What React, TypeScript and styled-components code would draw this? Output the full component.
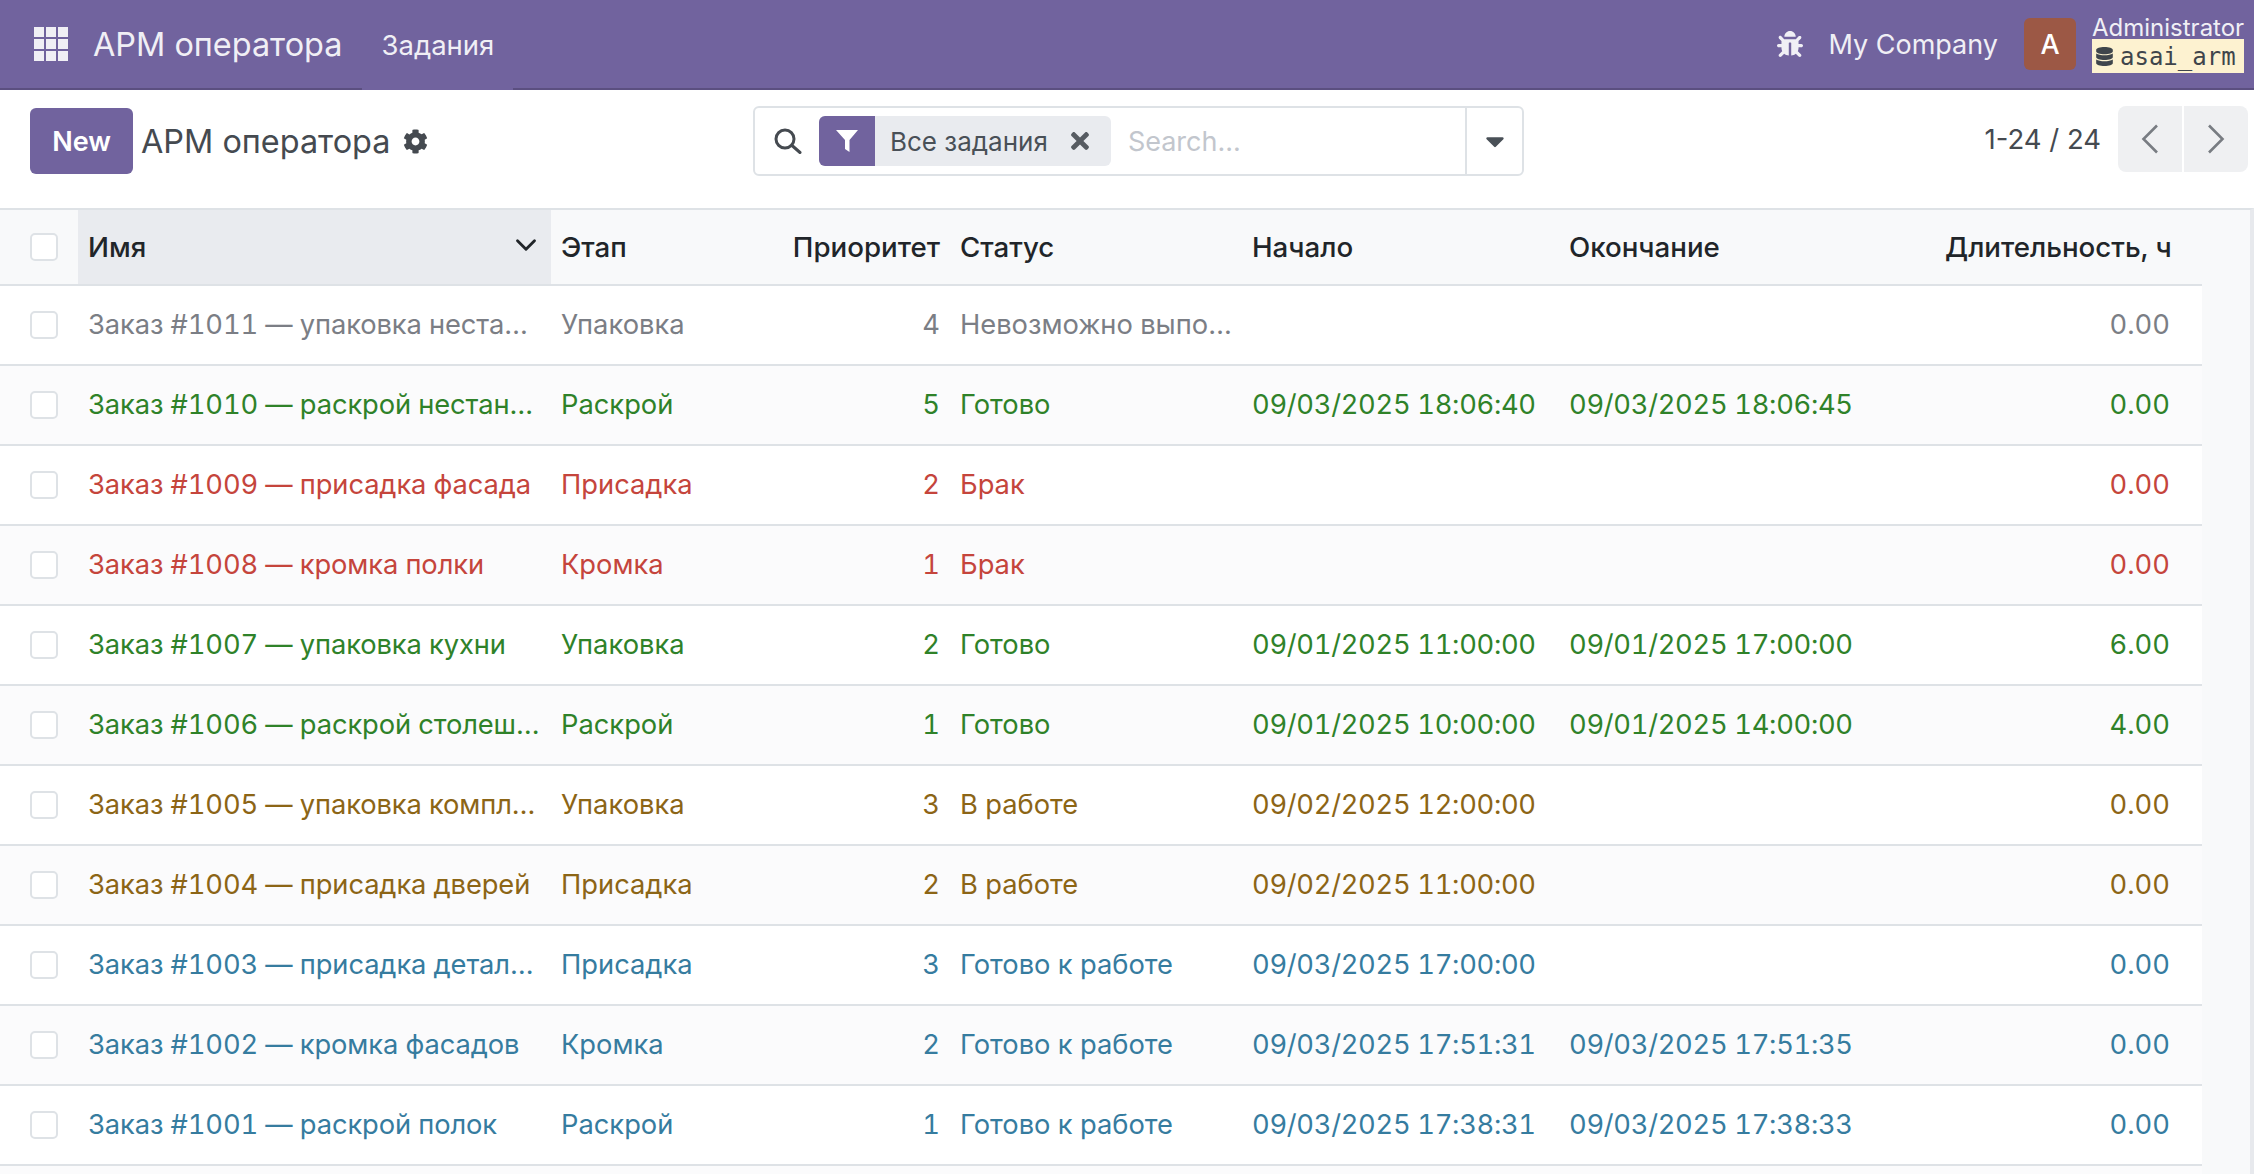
import React from 'react';
import styled, { createGlobalStyle } from 'styled-components';
import { FaBug, FaCaretDown, FaCog, FaDatabase, FaTimes } from 'react-icons/fa';
import { LuChevronDown } from 'react-icons/lu';

type Decoration = 'muted' | 'success' | 'danger' | 'warning' | 'info';

interface Task {
  name: string;
  stage: string;
  priority: number;
  status: string;
  start?: string;
  end?: string;
  duration: string;
  decoration: Decoration;
}

const decorationColors: Record<Decoration, string> = {
  muted: '#7b7e85',
  success: '#2f8229',
  danger: '#c5453c',
  warning: '#8c6516',
  info: '#367c9f',
};

const tasks: Task[] = [
  { name: 'Заказ #1011 — упаковка нестандартной мебели', stage: 'Упаковка', priority: 4, status: 'Невозможно выполнить', duration: '0.00', decoration: 'muted' },
  { name: 'Заказ #1010 — раскрой нестандартных деталей', stage: 'Раскрой', priority: 5, status: 'Готово', start: '09/03/2025 18:06:40', end: '09/03/2025 18:06:45', duration: '0.00', decoration: 'success' },
  { name: 'Заказ #1009 — присадка фасада', stage: 'Присадка', priority: 2, status: 'Брак', duration: '0.00', decoration: 'danger' },
  { name: 'Заказ #1008 — кромка полки', stage: 'Кромка', priority: 1, status: 'Брак', duration: '0.00', decoration: 'danger' },
  { name: 'Заказ #1007 — упаковка кухни', stage: 'Упаковка', priority: 2, status: 'Готово', start: '09/01/2025 11:00:00', end: '09/01/2025 17:00:00', duration: '6.00', decoration: 'success' },
  { name: 'Заказ #1006 — раскрой столешницы', stage: 'Раскрой', priority: 1, status: 'Готово', start: '09/01/2025 10:00:00', end: '09/01/2025 14:00:00', duration: '4.00', decoration: 'success' },
  { name: 'Заказ #1005 — упаковка комплекта', stage: 'Упаковка', priority: 3, status: 'В работе', start: '09/02/2025 12:00:00', duration: '0.00', decoration: 'warning' },
  { name: 'Заказ #1004 — присадка дверей', stage: 'Присадка', priority: 2, status: 'В работе', start: '09/02/2025 11:00:00', duration: '0.00', decoration: 'warning' },
  { name: 'Заказ #1003 — присадка деталей', stage: 'Присадка', priority: 3, status: 'Готово к работе', start: '09/03/2025 17:00:00', duration: '0.00', decoration: 'info' },
  { name: 'Заказ #1002 — кромка фасадов', stage: 'Кромка', priority: 2, status: 'Готово к работе', start: '09/03/2025 17:51:31', end: '09/03/2025 17:51:35', duration: '0.00', decoration: 'info' },
  { name: 'Заказ #1001 — раскрой полок', stage: 'Раскрой', priority: 1, status: 'Готово к работе', start: '09/03/2025 17:38:31', end: '09/03/2025 17:38:33', duration: '0.00', decoration: 'info' },
];

const columnWidths = [78, 473, 230, 169, 292, 317, 376, 245, 22];

const GlobalStyle = createGlobalStyle`
  html, body {
    margin: 0;
    height: 100%;
    overflow: hidden;
  }
  body {
    font-family: Inter, "Liberation Sans", sans-serif;
    font-size: 27px;
    background: #fff;
  }
`;

const Page = styled.div`
  height: 1174px;
  display: flex;
  flex-direction: column;
  overflow: hidden;
`;

const NavBar = styled.header`
  box-sizing: border-box;
  height: 90px;
  flex-shrink: 0;
  display: flex;
  align-items: center;
  background: #71639e;
  border-bottom: 2px solid #5b4f80;
  color: #f0eff5;
`;

const AppsIcon = styled.svg`
  width: 34px;
  height: 34px;
  margin-left: 34px;
  fill: #f0eff5;
`;

const Brand = styled.span`
  margin-left: 25px;
  font-size: 32.4px;
`;

const MenuItem = styled.span`
  box-sizing: border-box;
  height: 90px;
  width: 151px;
  margin-left: 20px;
  display: flex;
  align-items: center;
  justify-content: center;
  background: #71639e;
  font-size: 27.5px;
  margin-bottom: -2px;
`;

const NavRight = styled.div`
  margin-left: auto;
  display: flex;
  align-items: center;
  padding-right: 10px;
`;

const BugIcon = styled(FaBug)`
  width: 26px;
  height: 26px;
  margin-right: 25px;
`;

const CompanyName = styled.span`
  font-size: 27px;
  margin-right: 26px;
`;

const Avatar = styled.span`
  width: 52px;
  height: 52px;
  border-radius: 6px;
  background: #9c5845;
  color: #fff;
  font-size: 27px;
  font-weight: 500;
  display: flex;
  align-items: center;
  justify-content: center;
  margin-right: 16px;
`;

const UserBlock = styled.div`
  width: 152px;
  display: flex;
  flex-direction: column;
`;

const UserName = styled.span`
  height: 24px;
  font-size: 24px;
  line-height: 26px;
  white-space: nowrap;
`;

const DbBadge = styled.span`
  height: 34px;
  display: flex;
  align-items: center;
  gap: 7px;
  padding: 1px 0 0 4px;
  box-sizing: border-box;
  background: #fdf2d0;
  color: #3f454b;
  font-family: "DejaVu Sans Mono", "Liberation Mono", monospace;
  font-size: 24px;

  svg {
    width: 17px;
    height: 19px;
  }
`;

const ControlPanel = styled.div`
  box-sizing: border-box;
  height: 118px;
  flex-shrink: 0;
  display: flex;
  align-items: flex-start;
  padding: 16px 6px 0 30px;
`;

const NewButton = styled.button`
  width: 103px;
  height: 66px;
  margin-top: 2px;
  border: 0;
  border-radius: 6px;
  background: #71639e;
  color: #fff;
  font: 600 27px Inter, sans-serif;
`;

const Title = styled.div`
  width: 612px;
  height: 66px;
  margin-top: 2px;
  margin-left: 8px;
  display: flex;
  align-items: center;
  gap: 13px;
  color: #454a50;
  font-size: 32.4px;

  svg {
    width: 25px;
    height: 25px;
  }
`;

const SearchBox = styled.div`
  box-sizing: border-box;
  width: 771px;
  height: 70px;
  display: flex;
  align-items: center;
  border: 2px solid #dee2e6;
  border-radius: 6px;
`;

const SearchIcon = styled.svg`
  width: 28px;
  height: 26px;
  margin-left: 19px;
  fill: none;
  stroke: #454a50;
  stroke-width: 3;
  stroke-linecap: round;
`;

const Facet = styled.div`
  height: 50px;
  display: flex;
  align-items: center;
  margin-left: 17px;
  background: #e9ebef;
  border-radius: 6px;
  overflow: hidden;
  color: #495057;
`;

const FacetIcon = styled.span`
  width: 56px;
  height: 100%;
  display: flex;
  align-items: center;
  justify-content: center;
  background: #71639e;
  color: #fff;

  svg {
    width: 22px;
    height: 22px;
    fill: currentColor;
  }
`;

const FacetLabel = styled.span`
  margin-left: 15px;
  font-size: 26px;
`;

const FacetRemove = styled(FaTimes)`
  width: 26px;
  height: 26px;
  margin: 0 18px 0 19px;
  color: #575c62;
`;

const SearchPlaceholder = styled.span`
  flex: 1;
  margin-left: 17px;
  color: #c2c6cd;
  font-size: 27px;
`;

const SearchToggle = styled.span`
  width: 55px;
  height: 100%;
  display: flex;
  align-items: center;
  justify-content: center;
  border-left: 2px solid #dee2e6;
  color: #495057;

  svg {
    width: 30px;
    height: 30px;
  }
`;

const Pager = styled.div`
  margin-left: auto;
  display: flex;
  align-items: center;
  height: 66px;
  color: #454a50;
  font-size: 27.5px;
`;

const PagerButtons = styled.div`
  display: flex;
  gap: 2px;
  margin-left: 17px;
`;

const PagerButton = styled.span<{ $side: 'left' | 'right' }>`
  width: 64px;
  height: 66px;
  display: flex;
  align-items: center;
  justify-content: center;
  background: #eff0f2;
  color: #787c82;
  border-radius: ${(p) => (p.$side === 'left' ? '8px 0 0 8px' : '0 8px 8px 0')};

  svg {
    width: 18px;
    height: 30px;
    fill: none;
    stroke: currentColor;
    stroke-width: 2.6;
  }
`;

const ListArea = styled.div`
  flex: 1;
  overflow: hidden;
  background: #f8f9fa;
  border-top: 2px solid #dee2e6;
  border-right: 4px solid #e7e9ed;
`;

const Table = styled.table`
  width: 2202px;
  table-layout: fixed;
  border-collapse: separate;
  border-spacing: 0;
  font-variant-numeric: tabular-nums;
`;

const HeaderCell = styled.th<{ $right?: boolean; $sorted?: boolean }>`
  box-sizing: border-box;
  height: 76px;
  padding: 0 10px;
  border-bottom: 2px solid #dee2e6;
  background: ${(p) => (p.$sorted ? '#e9ebef' : '#f8f9fa')};
  background-clip: padding-box;
  color: #212529;
  font-size: 27.7px;
  font-weight: 500;
  text-align: ${(p) => (p.$right ? 'right' : 'left')};
  white-space: nowrap;
`;

const SortHeader = styled.div`
  display: flex;
  align-items: center;
  justify-content: space-between;

  svg {
    width: 34px;
    height: 34px;
    margin-top: -4px;
    margin-right: -2px;
  }
`;

const Row = styled.tr<{ $color: string; $striped: boolean }>`
  color: ${(p) => p.$color};
  background: ${(p) => (p.$striped ? '#fbfbfc' : '#fff')};
`;

const Cell = styled.td<{ $right?: boolean; $spacing?: string }>`
  box-sizing: border-box;
  height: 80px;
  padding: 0 10px 1px;
  border-bottom: 2px solid #dee2e6;
  font-size: 27.3px;
  letter-spacing: ${(p) => p.$spacing ?? 'normal'};
  text-align: ${(p) => (p.$right ? 'right' : 'left')};
  white-space: nowrap;
  overflow: hidden;
  text-overflow: ellipsis;
`;

const CheckCell = styled.div`
  display: flex;
  justify-content: center;
  padding-left: 10px;
`;

const CheckBox = styled.span`
  box-sizing: border-box;
  width: 28px;
  height: 28px;
  border: 2px solid #dee2e6;
  border-radius: 5px;
  background: #fff;
`;

export default function App() {
  return (
    <Page>
      <GlobalStyle />
      <NavBar>
        <AppsIcon viewBox="0 0 34 34">
          {[0, 1, 2].flatMap((row) =>
            [0, 1, 2].map((col) => (
              <rect key={`${row}-${col}`} x={col * 12} y={row * 12} width="10" height="10" />
            ))
          )}
        </AppsIcon>
        <Brand>АРМ оператора</Brand>
        <MenuItem>Задания</MenuItem>
        <NavRight>
          <BugIcon />
          <CompanyName>My Company</CompanyName>
          <Avatar>A</Avatar>
          <UserBlock>
            <UserName>Administrator</UserName>
            <DbBadge>
              <FaDatabase />
              asai_arm
            </DbBadge>
          </UserBlock>
        </NavRight>
      </NavBar>
      <ControlPanel>
        <NewButton>New</NewButton>
        <Title>
          АРМ оператора
          <FaCog />
        </Title>
        <SearchBox>
          <SearchIcon viewBox="0 0 28 26">
            <circle cx="11" cy="11" r="9" />
            <path d="M18 17.5L26 24.5" />
          </SearchIcon>
          <Facet>
            <FacetIcon>
              <svg viewBox="0 0 22 22">
                <path d="M0 0H22L13.5 10V22L9 19V10Z" />
              </svg>
            </FacetIcon>
            <FacetLabel>Все задания</FacetLabel>
            <FacetRemove />
          </Facet>
          <SearchPlaceholder>Search...</SearchPlaceholder>
          <SearchToggle>
            <FaCaretDown />
          </SearchToggle>
        </SearchBox>
        <Pager>
          1-24 / 24
          <PagerButtons>
            <PagerButton $side="left">
              <svg viewBox="0 0 18 30">
                <path d="M16 1.5L2.5 15L16 28.5" />
              </svg>
            </PagerButton>
            <PagerButton $side="right">
              <svg viewBox="0 0 18 30">
                <path d="M2 1.5L15.5 15L2 28.5" />
              </svg>
            </PagerButton>
          </PagerButtons>
        </Pager>
      </ControlPanel>
      <ListArea>
        <Table>
          <colgroup>
            {columnWidths.map((width, i) => (
              <col key={i} width={width} />
            ))}
          </colgroup>
          <thead>
            <tr>
              <HeaderCell>
                <CheckCell>
                  <CheckBox />
                </CheckCell>
              </HeaderCell>
              <HeaderCell $sorted>
                <SortHeader>
                  Имя
                  <LuChevronDown />
                </SortHeader>
              </HeaderCell>
              <HeaderCell>Этап</HeaderCell>
              <HeaderCell $right>Приоритет</HeaderCell>
              <HeaderCell>Статус</HeaderCell>
              <HeaderCell>Начало</HeaderCell>
              <HeaderCell>Окончание</HeaderCell>
              <HeaderCell $right>Длительность, ч</HeaderCell>
              <HeaderCell />
            </tr>
          </thead>
          <tbody>
            {tasks.map((task, i) => (
              <Row key={task.name} $color={decorationColors[task.decoration]} $striped={i % 2 === 1}>
                <Cell>
                  <CheckCell>
                    <CheckBox />
                  </CheckCell>
                </Cell>
                <Cell $spacing="-0.1px">{task.name}</Cell>
                <Cell>{task.stage}</Cell>
                <Cell $right>{task.priority}</Cell>
                <Cell>{task.status}</Cell>
                <Cell $spacing="-0.3px">{task.start}</Cell>
                <Cell $spacing="-0.3px">{task.end}</Cell>
                <Cell $right>{task.duration}</Cell>
                <Cell />
              </Row>
            ))}
            <Row $color="#fff" $striped>
              <Cell colSpan={9} />
            </Row>
          </tbody>
        </Table>
      </ListArea>
    </Page>
  );
}
